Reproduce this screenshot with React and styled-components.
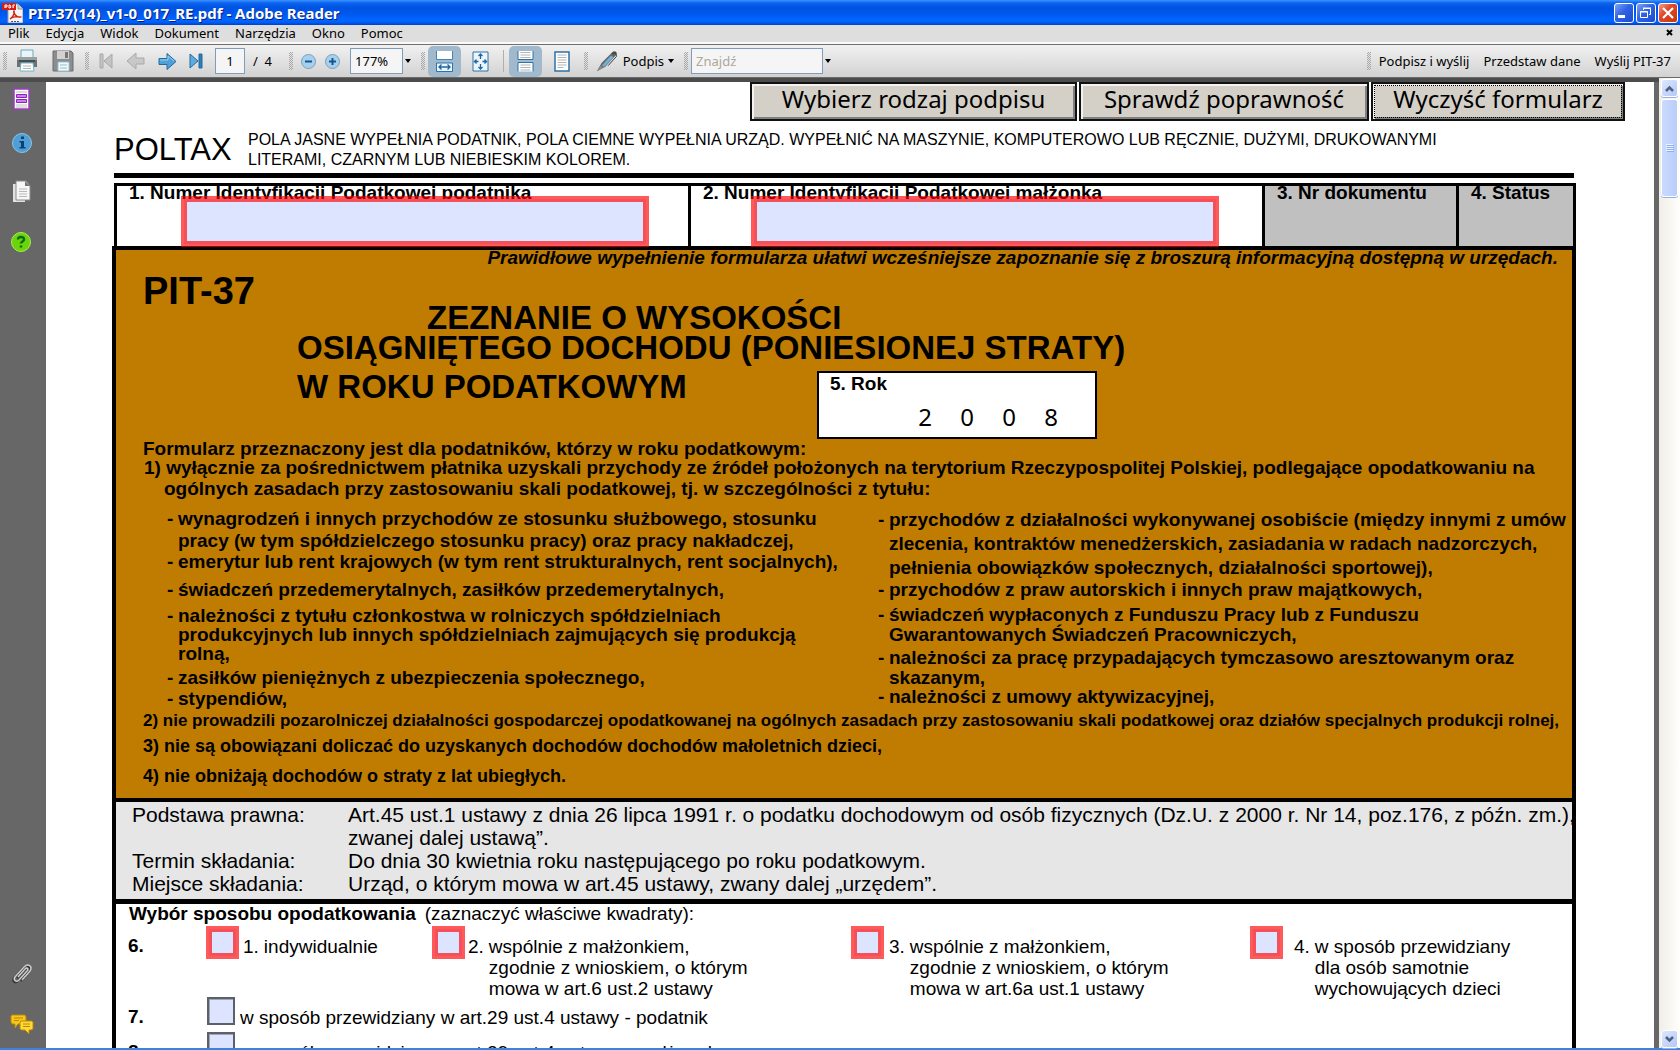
import styled, { createGlobalStyle } from "styled-components";

const GlobalStyle = createGlobalStyle`
  * {
    box-sizing: border-box;
  }
  body {
    margin: 0;
    overflow: hidden;
    font-family: "Liberation Sans", Arial, sans-serif;
    color: #000;
  }
  button, input {
    font: inherit;
    color: inherit;
    margin: 0;
  }
  h1, h2, p, ul, dl, dd {
    margin: 0;
    padding: 0;
  }
  svg {
    display: block;
  }
`;

const Window = styled.div`
  display: flex;
  flex-direction: column;
  height: 100vh;
  border-bottom: 2px solid #3f82dc;
`;

/* ---------- title bar ---------- */

const TitleBar = styled.header`
  flex: none;
  display: flex;
  align-items: center;
  height: 25px;
  padding: 0 2px;
  background: linear-gradient(
    #3d95ff 0,
    #0a63f0 3px,
    #0053e1 8px,
    #0058ee 14px,
    #0066ff 20px,
    #0061fb 22px,
    #0040c8 25px
  );
`;

const Title = styled.h1`
  flex: 1;
  padding-left: 5px;
  font: bold 15px/20px "Noto Sans", sans-serif;
  color: #fff;
  text-shadow: 1px 1px 0 #0a1e82;
`;

const WindowButtons = styled.div`
  display: flex;
  gap: 2px;
`;

const WindowButton = styled.button`
  width: 20px;
  height: 20px;
  padding: 0;
  border: 1px solid #fff;
  border-radius: 3px;
  background: ${(props) =>
    props.$close
      ? "linear-gradient(135deg, #f0a088, #e0482a 40%, #c8350f)"
      : "linear-gradient(135deg, #7fa4f5, #2f63e4 45%, #1c4bd0)"};
`;

/* ---------- menu ---------- */

const MenuBar = styled.nav`
  flex: none;
  display: flex;
  align-items: center;
  gap: 16px;
  height: 20px;
  padding: 0 7px 4px 8px;
  background: #dedede;
  border-bottom: 1px solid #6f6f6f;
  box-shadow: inset 0 -2px 0 #fafafa;
`;

const MenuItem = styled.button`
  padding: 0;
  border: 0;
  background: none;
  font: 13px/16px "Noto Sans", sans-serif;
`;

const CloseDocument = styled(MenuItem)`
  margin-left: auto;
`;

/* ---------- toolbar ---------- */

const Toolbar = styled.div`
  flex: none;
  display: flex;
  align-items: center;
  height: 33px;
  background: linear-gradient(#f1f1f1, #d2d2d2);
  border-bottom: 1px solid #6a6a6a;
  font: 13px/16px "Noto Sans", sans-serif;
`;

const Handle = styled.span`
  flex: none;
  width: 4px;
  height: 18px;
  margin-left: ${(props) => (props.$end ? "auto" : `${props.$gap}px`)};
  background: repeating-conic-gradient(#a8a8a8 0 25%, transparent 0 50%) 0 0 /
    2px 2px;
`;

const ToolButton = styled.button`
  flex: none;
  display: flex;
  align-items: center;
  justify-content: center;
  width: ${(props) => props.$width}px;
  height: 31px;
  margin-left: ${(props) => props.$gap}px;
  padding: 0;
  border: 0;
  border-radius: 5px;
  background: ${(props) => (props.$active ? "#a0b9cd" : "none")};
  white-space: nowrap;
`;

const ToolInput = styled.input`
  flex: none;
  width: ${(props) => props.$width}px;
  height: 26px;
  margin-left: ${(props) => props.$gap}px;
  padding: 0 4px;
  border: 1px solid #7f9db9;
  background: #f5f5f5;
  text-align: ${(props) => props.$align || "left"};
  &::placeholder {
    color: #aca899;
  }
`;

const PageCount = styled.span`
  margin-left: 8px;
  white-space: pre;
`;

const Separator = styled.span`
  width: 1px;
  height: 22px;
  margin-left: 6px;
  background: #b5b09c;
`;

const TextTools = styled.div`
  display: flex;
  align-items: center;
  gap: 14px;
  padding: 0 9px 0 8px;
`;

const TextTool = styled(MenuItem)`
  white-space: nowrap;
`;

/* ---------- body ---------- */

const Body = styled.div`
  flex: 1;
  display: flex;
  min-height: 0;
`;

const Viewer = styled.div`
  flex: 1;
  display: flex;
  min-width: 0;
  border-top: 4px solid #4c4c4c;
  background: #676767;
`;

const Sidebar = styled.aside`
  flex: none;
  display: flex;
  flex-direction: column;
  width: 46px;
  padding: 5px 0 12px 10px;
`;

const SideButton = styled.button`
  width: 24px;
  height: 24px;
  margin-top: ${(props) => (props.$last ? "auto" : `${props.$gap}px`)};
  padding: 0;
  border: 0;
  background: none;
`;

const Page = styled.main`
  flex: 1;
  min-width: 0;
  margin-right: 5px;
  overflow: hidden;
  background: #fff;
`;

const ScrollBar = styled.div`
  flex: none;
  display: flex;
  flex-direction: column;
  width: 21px;
  padding: 1px 2px 0;
  background: linear-gradient(90deg, #f0eee8, #fefefb);
`;

const ScrollButton = styled.button`
  display: flex;
  align-items: center;
  justify-content: center;
  height: 18px;
  padding: 0;
  border: 1px solid #fff;
  border-radius: 3px;
  background: linear-gradient(135deg, #dce7ff, #b4c8f6);
  box-shadow: 0 1px 0 #98b0e8;
`;

const ScrollThumb = styled.div`
  display: flex;
  align-items: center;
  justify-content: center;
  height: 98px;
  margin-top: 2px;
  margin-bottom: auto;
  border: 1px solid #fff;
  border-radius: 3px;
  background: linear-gradient(90deg, #cbdbfe, #b9cdfa);
  box-shadow: 0 1px 0 #98b0e8;
`;

/* ---------- form ---------- */

const FormActions = styled.div`
  display: flex;
  justify-content: flex-end;
  gap: 2px;
  padding-right: 29px;
`;

const FormButton = styled.button`
  width: ${(props) => props.$width}px;
  height: 39px;
  padding: 0 0 5px;
  border: 2px solid #111;
  background: #d4d0c8;
  box-shadow: inset 2px 2px 0 #f4f2ee, inset -2px -2px 0 #808080;
  font: 24px/30px "Noto Sans", sans-serif;
  white-space: nowrap;
  outline: ${(props) => (props.$focused ? "1px dotted #000" : "none")};
  outline-offset: -4px;
`;

const Form = styled.form`
  margin: 9px 78px 0 66px;
  font-size: 19px;
`;

const Intro = styled.div`
  display: flex;
  margin: 0 2px;
  padding-bottom: 3px;
  border-bottom: 5px solid #000;
`;

const Brand = styled.div`
  flex: none;
  width: 134px;
  font-size: 31px;
  line-height: 40px;
`;

const IntroText = styled.p`
  font-size: 16px;
  line-height: 20px;
  white-space: nowrap;
`;

const IdRow = styled.div`
  display: grid;
  grid-template-columns: 574fr 574fr 194fr 114fr;
  margin: 5px 0 0 2px;
  border: 3px solid #000;
  border-bottom: 0;
`;

const IdCell = styled.div`
  position: relative;
  height: 60px;
  padding-left: 12px;
  border-right: 3px solid #000;
  background: ${(props) => (props.$office ? "#c0c0c0" : "#fff")};
  font-weight: bold;
  line-height: 14px;
  white-space: nowrap;
  &:last-child {
    border-right: 0;
  }
`;

const IdField = styled.input`
  position: absolute;
  top: 10px;
  left: ${(props) => props.$left}px;
  width: 82%;
  height: 51px;
  border: 3px solid rgba(255, 0, 0, 0.65);
  background: #dde4ff padding-box;
  box-shadow: inset 0 0 0 3px rgba(255, 0, 0, 0.65);
`;

const Sheet = styled.div`
  border: 4px solid #000;
  border-bottom: 0;
`;

const Cover = styled.section`
  padding-bottom: 7px;
  border-bottom: 4px solid #000;
  background: #bf7c00;
  font-weight: bold;
  white-space: nowrap;
`;

const Hint = styled.p`
  padding-right: 14px;
  font-style: italic;
  line-height: 16px;
  text-align: right;
`;

const Heading = styled.div`
  display: grid;
  grid-template-columns: 154px 1fr;
  padding: 5px 0 0 27px;
`;

const FormCode = styled.div`
  font-size: 38px;
  line-height: 40px;
`;

const FormTitle = styled.h2`
  padding-top: 32px;
  font-size: 33px;
  line-height: 30px;
`;

const TitleLead = styled.div`
  padding-left: 130px;
`;

const YearRow = styled.div`
  display: grid;
  grid-template-columns: 520px 280px;
  margin-top: 8px;
  line-height: 32px;
`;

const YearBox = styled.div`
  height: 68px;
  padding: 1px 0 0 11px;
  border: 2px solid #000;
  background: #fff;
  font-size: 19px;
  line-height: 20px;
`;

const Digits = styled.div`
  display: grid;
  grid-template-columns: repeat(4, 42px);
  margin: 8px 0 0 74px;
  font: 24px/30px "Noto Sans", sans-serif;
  text-align: center;
`;

const Para = styled.p`
  padding-left: ${(props) => props.$indent || 27}px;
  font-size: ${(props) => props.$size || 19}px;
  line-height: ${(props) => props.$line}px;
`;

const Columns = styled.div`
  display: grid;
  grid-template-columns: 762fr 694fr;
  margin: 7px 0 2px;
`;

const List = styled.ul`
  padding-left: ${(props) => props.$indent}px;
  list-style: none;
`;

const Item = styled.li`
  display: flex;
  margin-top: ${(props) => props.$gap}px;
  line-height: ${(props) => props.$line}px;
  &::before {
    content: "-";
    width: 11px;
  }
`;

const Legal = styled.dl`
  display: grid;
  grid-template-columns: 216px 1fr;
  padding: 1px 0 4px 16px;
  border-bottom: 5px solid #000;
  background: #e6e6e6;
  font-size: 21px;
  line-height: 23px;
  white-space: nowrap;
`;

const Choices = styled.section`
  line-height: 20px;
  white-space: nowrap;
`;

const ChoicesTitle = styled.p`
  display: flex;
  gap: 9px;
  padding: 0 0 2px 13px;
`;

const ChoiceRow = styled.div`
  display: grid;
  grid-template-columns: 90px 226fr 419fr 399fr 322fr;
  height: ${(props) => props.$height}px;
`;

const RowNumber = styled.strong`
  padding: 10px 0 0 12px;
`;

const Choice = styled.div`
  display: flex;
  gap: ${(props) => props.$gap}px;
`;

const WideChoice = styled(Choice)`
  grid-column: 2 / -1;
  padding-left: 1px;
`;

const CheckBox = styled.input.attrs({ type: "checkbox" })`
  appearance: none;
  flex: none;
  width: ${(props) => (props.$required ? 33 : 28)}px;
  height: ${(props) => (props.$required ? 33 : 28)}px;
  border: ${(props) =>
    props.$required ? "3px solid rgba(255, 0, 0, 0.65)" : "2px solid #5c6068"};
  background: #dde4ff padding-box;
  box-shadow: ${(props) =>
    props.$required
      ? "inset 0 0 0 3px rgba(255, 0, 0, 0.65)"
      : "inset 1px 1px 0 #a0a6b8"};
`;

const ChoiceLabel = styled.label`
  display: flex;
  gap: 5px;
  padding-top: 10px;
  line-height: 21px;
`;

/* ---------- icons ---------- */

const PdfIcon = () => (
  <svg width="21" height="20" viewBox="0 0 21 20">
    <path d="M6 1h10l5 5v14H6z" fill="#f4f4f4" stroke="#999" />
    <path d="M16 1v5h5" fill="#cfcfcf" stroke="#999" />
    <path d="M0 0h14v7H0z" fill="#d81e10" />
    <path
      d="M3 5V2h2v2H3M7 2v3h1l1-1-1-2zM11 5V2h2M11 4h1"
      fill="none"
      stroke="#fff"
    />
    <path
      d="M8 16c3-2 5-6 4-8-1 1 2 7 6 6-3-1-8 0-10 2z"
      fill="none"
      stroke="#d02010"
      strokeWidth="1.4"
    />
    <path d="M9 18.500h9" stroke="#555" strokeDasharray="2 1" />
  </svg>
);

const MinimizeIcon = () => (
  <svg width="18" height="18" viewBox="0 0 18 18">
    <path d="M3 11h7v3H3z" fill="#fff" />
  </svg>
);

const RestoreIcon = () => (
  <svg width="18" height="18" viewBox="0 0 18 18" fill="none" stroke="#fff">
    <path d="M6.500 6V4.500h7v6H12M6 4h8" />
    <path d="M3.500 7.500h7v6h-7zM3 8h8" />
  </svg>
);

const CloseIcon = () => (
  <svg width="18" height="18" viewBox="0 0 18 18">
    <path d="M4 4l10 10M14 4L4 14" stroke="#fff" strokeWidth="2.200" />
  </svg>
);

const SmallCross = () => (
  <svg width="7" height="7" viewBox="0 0 7 7">
    <path d="M1 1l5 5M6 1L1 6" stroke="#000" strokeWidth="2" />
  </svg>
);

const PrinterIcon = () => (
  <svg width="22" height="24" viewBox="0 0 22 24">
    <path d="M5 1h12v8H5z" fill="#e8f6fa" stroke="#6fa9bd" />
    <path d="M1 9h20v9H1z" fill="#6e7275" />
    <path d="M1 8h20v3H1z" fill="#9b9fa2" />
    <path d="M3 12h16" stroke="#4a4d50" strokeWidth="2" />
    <path d="M5 14h12l1 8H4z" fill="#fff" stroke="#6fb4cc" />
    <path d="M7 17h8M7 19.500h8" stroke="#b5b5b5" />
  </svg>
);

const SaveIcon = () => (
  <svg width="22" height="22" viewBox="0 0 22 22">
    <path d="M1 1h18l2 2v18H1z" fill="#8d8d8d" stroke="#6c6c6c" />
    <path d="M5 1h12v8H5z" fill="#d2d2d2" />
    <path d="M13 2h3v6h-3z" fill="#757575" />
    <path d="M6 12h11v9H6z" fill="#f4fafc" stroke="#8ac4da" />
    <path d="M8 15h7M8 18h7" stroke="#9bb8c4" />
  </svg>
);

const FirstIcon = () => (
  <svg width="14" height="16" viewBox="0 0 14 16">
    <path d="M1 1h3v14H1zM13 1v14L5 8z" fill="#c4c4c4" stroke="#a8a8a8" />
  </svg>
);

const PrevIcon = () => (
  <svg width="19" height="18" viewBox="0 0 19 18">
    <path
      d="M1 9l9-8v5h8v6h-8v5z"
      fill="#c8c8c8"
      stroke="#a9a9a9"
      strokeLinejoin="round"
    />
  </svg>
);

const NextIcon = () => (
  <svg width="19" height="19" viewBox="0 0 19 19">
    <path
      d="M18 9.500l-9-8v5H1v6h8v5z"
      fill="#4fa0d8"
      stroke="#246a9f"
      strokeLinejoin="round"
    />
    <path d="M2 8h8V4l6 5" fill="none" stroke="#9bd0f0" />
  </svg>
);

const LastIcon = () => (
  <svg width="14" height="16" viewBox="0 0 14 16">
    <path d="M1 1v14l8-7z" fill="#5fabdd" stroke="#246a9f" />
    <path d="M10 1h3v14h-3z" fill="#2f7db8" stroke="#246a9f" />
  </svg>
);

const ZoomDot = ({ plus }) => (
  <svg width="17" height="17" viewBox="0 0 17 17">
    <circle cx="8.500" cy="8.500" r="7" fill="#a5d0ee" stroke="#7f9fb5" />
    <path d="M5 8.500h7" stroke="#14578f" strokeWidth="2" />
    {plus && <path d="M8.500 5v7" stroke="#14578f" strokeWidth="2" />}
  </svg>
);

const Caret = () => (
  <svg width="6" height="4" viewBox="0 0 6 4">
    <path d="M0 0h6L3 4z" fill="#000" />
  </svg>
);

const FitWidthIcon = () => (
  <svg width="17" height="21" viewBox="0 0 17 21">
    <path d="M1 0h15v8H1z" fill="#fff" />
    <path d="M.5 0v8.500h16V0" fill="none" stroke="#3f86b8" />
    <path d="M.5 12h16v8.500H.5z" fill="#eaf5fc" stroke="#2c72a8" />
    <path
      d="M3 16h11M5.500 13.500L3 16l2.500 2.500M11.500 13.500L14 16l-2.500 2.500"
      fill="none"
      stroke="#1e65a2"
      strokeWidth="1.300"
    />
  </svg>
);

const FitPageIcon = () => (
  <svg width="17" height="21" viewBox="0 0 17 21">
    <path d="M1 1h15v19H1z" fill="#edf6fc" stroke="#2c72a8" />
    <path
      d="M8.500 3v5M8.500 13v5M2 10.500h4.500M10.500 10.500H15M6.500 5l2-2 2 2M6.500 16l2 2 2-2M4.500 8.500l-2 2 2 2M12.500 8.500l2 2-2 2"
      fill="none"
      stroke="#1e65a2"
      strokeWidth="1.300"
    />
  </svg>
);

const ContinuousIcon = () => (
  <svg width="17" height="21" viewBox="0 0 17 21">
    <path d="M1 0v8.500h15V0M1 20.500V11.500h15v9" fill="#fff" stroke="#2c72a8" />
    <path
      d="M3.500 1.500h10M3.500 4h10M3.500 6.500h10M3.500 14h10M3.500 16.500h10M3.500 19h10"
      stroke="#b3b3b3"
    />
  </svg>
);

const SinglePageIcon = () => (
  <svg width="16" height="21" viewBox="0 0 16 21">
    <path d="M1 1h14v19H1z" fill="#fff" stroke="#2c72a8" strokeWidth="1.500" />
    <path
      d="M3.500 4h9M3.500 6.500h9M3.500 9h9M3.500 11.500h9M3.500 14h9M3.500 16.500h6"
      stroke="#b3b3b3"
    />
  </svg>
);

const PenIcon = () => (
  <svg width="25" height="23" viewBox="0 0 25 23">
    <path d="M1 22l5-9L18 1c2-1 5 0 4 3L10 17z" fill="#646464" />
    <path d="M6 16L16 5l3 2L9 17z" fill="#6fb0d4" />
    <path d="M17 3l4-1 1 4-9 10" fill="none" stroke="#333" />
    <path d="M1 22l4-6 3 2z" fill="#8c8c8c" />
  </svg>
);

const Chevron = ({ down }) => (
  <svg width="9" height="7" viewBox="0 0 9 7">
    <path
      d={down ? "M1 1l3.500 3.500L8 1" : "M1 6l3.500-3.500L8 6"}
      fill="none"
      stroke="#4d6185"
      strokeWidth="2.500"
    />
  </svg>
);

const GripIcon = () => (
  <svg width="8" height="8" viewBox="0 0 8 8">
    <path d="M0 .5h7M0 2.500h7M0 4.500h7M0 6.500h7" stroke="#eef4fe" />
    <path d="M1 1.500h7M1 3.500h7M1 5.500h7M1 7.500h7" stroke="#8cb0f8" />
  </svg>
);

const FormPanelIcon = () => (
  <svg width="24" height="24" viewBox="0 0 24 24">
    <path d="M4 2h15v20H4z" fill="#fff" stroke="#a03cc4" strokeWidth="1.500" />
    <path d="M6 5h11M6 18h11M6 20h11" stroke="#bdbdbd" />
    <path
      d="M6.500 7.500h10v3h-10zM6.500 12.500h10v3h-10z"
      fill="#d07cf0"
      stroke="#8a26b4"
    />
  </svg>
);

const InfoIcon = () => (
  <svg width="24" height="24" viewBox="0 0 24 24">
    <circle cx="12" cy="12" r="9.500" fill="#4f9fd4" stroke="#8cc4e6" />
    <path d="M11 5.500h3v2.500h-3zM9.500 10H14v6h1.500v1.500h-6V16H11v-4.500H9.500z" fill="#0b3f78" />
  </svg>
);

const PagesIcon = () => (
  <svg width="24" height="24" viewBox="0 0 24 24">
    <path d="M3 4h12v18H3z" fill="#e2e2e2" />
    <path d="M6 1h10l4 5v14H6z" fill="#f7f7f7" stroke="#8a8a8a" />
    <path d="M15 1v5h5z" fill="#777" />
    <path d="M9 9h8M9 11.500h8M9 14h8M9 16.500h8" stroke="#b8b8b8" />
  </svg>
);

const HelpIcon = () => (
  <svg width="24" height="24" viewBox="0 0 24 24">
    <circle cx="11" cy="12" r="9.500" fill="#6bd40c" stroke="#a8ee52" />
    <path
      d="M8 9.500c0-3.500 6-3.500 6 0 0 2-3 2-3 4M11 15.500v2"
      fill="none"
      stroke="#0b6a12"
      strokeWidth="2.500"
    />
  </svg>
);

const ClipIcon = () => (
  <svg width="24" height="24" viewBox="0 0 24 24" fill="none" strokeWidth="2">
    <path
      d="M8 15l7-8c2-2 4 0 2 2l-8 9c-3 3-6 0-4-3l9-10c4-4 9-1 6 4l-8 9"
      transform="translate(-1 1)"
      stroke="#333"
    />
    <path
      d="M8 15l7-8c2-2 4 0 2 2l-8 9c-3 3-6 0-4-3l9-10c4-4 9-1 6 4l-8 9"
      stroke="#cfcfcf"
      strokeWidth="1.500"
    />
  </svg>
);

const CommentsIcon = () => (
  <svg width="24" height="24" viewBox="0 0 24 24" stroke="#b98a00">
    <path d="M2 3h13l1 2v6l-2 1H8l-3 4v-4H2L1 10V4z" fill="#f7c61c" />
    <path d="M4 6h9M4 8.500h5" />
    <path d="M11 9h11l1 1v7l-2 1h-2v4l-4-4h-4l-1-1v-7z" fill="#ffd83a" />
    <path d="M13 12h7M13 14.500h7" />
  </svg>
);

/* ---------- data ---------- */

const menu = ["Plik", "Edycja", "Widok", "Dokument", "Narzędzia", "Okno", "Pomoc"];

const sideTop = [
  { name: "Formularz", Icon: FormPanelIcon, gap: 0 },
  { name: "Informacje", Icon: InfoIcon, gap: 20 },
  { name: "Strony", Icon: PagesIcon, gap: 25 },
  { name: "Pomoc", Icon: HelpIcon, gap: 26 },
];

const leftItems = [
  {
    gap: 0,
    line: 22,
    lines: [
      "wynagrodzeń i innych przychodów ze stosunku służbowego, stosunku",
      "pracy (w tym spółdzielczego stosunku pracy) oraz pracy nakładczej,",
    ],
  },
  {
    gap: 0,
    line: 20,
    lines: ["emerytur lub rent krajowych (w tym rent strukturalnych, rent socjalnych),"],
  },
  {
    gap: 8,
    line: 20,
    lines: ["świadczeń przedemerytalnych, zasiłków przedemerytalnych,"],
  },
  {
    gap: 6,
    line: 19,
    lines: [
      "należności z tytułu członkostwa w rolniczych spółdzielniach",
      "produkcyjnych lub innych spółdzielniach zajmujących się produkcją",
      "rolną,",
    ],
  },
  {
    gap: 5,
    line: 20,
    lines: ["zasiłków pieniężnych z ubezpieczenia społecznego,"],
  },
  { gap: 1, line: 20, lines: ["stypendiów,"] },
];

const rightItems = [
  {
    gap: 0,
    line: 24,
    lines: [
      "przychodów z działalności wykonywanej osobiście (między innymi z umów",
      "zlecenia, kontraktów menedżerskich, zasiadania w radach nadzorczych,",
      "pełnienia obowiązków społecznych, działalności sportowej),",
    ],
  },
  {
    gap: 0,
    line: 20,
    lines: ["przychodów z praw autorskich i innych praw majątkowych,"],
  },
  {
    gap: 5,
    line: 20,
    lines: [
      "świadczeń wypłaconych z Funduszu Pracy lub z Funduszu",
      "Gwarantowanych Świadczeń Pracowniczych,",
    ],
  },
  {
    gap: 3,
    line: 20,
    lines: [
      "należności za pracę przypadających tymczasowo aresztowanym oraz",
      "skazanym,",
    ],
  },
  { gap: 0, line: 18, lines: ["należności z umowy aktywizacyjnej,"] },
];

const options = [
  { gap: 4, lines: ["indywidualnie"] },
  {
    gap: 3,
    lines: [
      "wspólnie z małżonkiem,",
      "zgodnie z wnioskiem, o którym",
      "mowa w art.6 ust.2 ustawy",
    ],
  },
  {
    gap: 5,
    lines: [
      "wspólnie z małżonkiem,",
      "zgodnie z wnioskiem, o którym",
      "mowa w art.6a ust.1 ustawy",
    ],
  },
  {
    gap: 11,
    lines: ["w sposób przewidziany", "dla osób samotnie", "wychowujących dzieci"],
  },
];

const Lines = ({ lines }) => (
  <div>
    {lines.map((line) => (
      <div key={line}>{line}</div>
    ))}
  </div>
);

const Bullets = ({ items, indent }) => (
  <List $indent={indent}>
    {items.map((item) => (
      <Item key={item.lines[0]} $gap={item.gap} $line={item.line}>
        <Lines lines={item.lines} />
      </Item>
    ))}
  </List>
);

const ReaderToolbar = () => (
  <Toolbar>
    <Handle $gap={3} />
    <ToolButton $width={24} $gap={8} aria-label="Drukuj">
      <PrinterIcon />
    </ToolButton>
    <ToolButton $width={24} $gap={12} aria-label="Zapisz">
      <SaveIcon />
    </ToolButton>
    <Handle $gap={10} />
    <ToolButton $width={20} $gap={7} aria-label="Pierwsza strona">
      <FirstIcon />
    </ToolButton>
    <ToolButton $width={20} $gap={9} aria-label="Poprzednia strona">
      <PrevIcon />
    </ToolButton>
    <ToolButton $width={20} $gap={12} aria-label="Następna strona">
      <NextIcon />
    </ToolButton>
    <ToolButton $width={20} $gap={9} aria-label="Ostatnia strona">
      <LastIcon />
    </ToolButton>
    <ToolInput
      $width={30}
      $gap={9}
      $align="center"
      aria-label="Numer strony"
      defaultValue="1"
    />
    <PageCount>{"/  4"}</PageCount>
    <Handle $gap={17} />
    <ToolButton $width={18} $gap={6} aria-label="Pomniejsz">
      <ZoomDot />
    </ToolButton>
    <ToolButton $width={18} $gap={6} aria-label="Powiększ">
      <ZoomDot plus />
    </ToolButton>
    <ToolInput $width={53} $gap={9} aria-label="Powiększenie" defaultValue="177%" />
    <ToolButton $width={8} $gap={1} aria-label="Lista powiększeń">
      <Caret />
    </ToolButton>
    <Handle $gap={9} />
    <ToolButton $width={33} $gap={3} $active aria-label="Dopasuj szerokość">
      <FitWidthIcon />
    </ToolButton>
    <ToolButton $width={33} $gap={3} aria-label="Dopasuj stronę">
      <FitPageIcon />
    </ToolButton>
    <Separator />
    <ToolButton $width={33} $gap={5} $active aria-label="Widok ciągły">
      <ContinuousIcon />
    </ToolButton>
    <ToolButton $width={33} $gap={3} aria-label="Jedna strona">
      <SinglePageIcon />
    </ToolButton>
    <Handle $gap={6} />
    <ToolButton $width={68} $gap={8}>
      <PenIcon />
      &nbsp;Podpis
    </ToolButton>
    <ToolButton $width={8} $gap={3} aria-label="Opcje podpisu">
      <Caret />
    </ToolButton>
    <Handle $gap={9} />
    <ToolInput $width={132} $gap={3} aria-label="Znajdź" placeholder="Znajdź" />
    <ToolButton $width={8} $gap={1} aria-label="Opcje wyszukiwania">
      <Caret />
    </ToolButton>
    <Handle $end />
    <TextTools>
      <TextTool>Podpisz i wyślij</TextTool>
      <TextTool>Przedstaw dane</TextTool>
      <TextTool>Wyślij PIT-37</TextTool>
    </TextTools>
  </Toolbar>
);

const CoverSection = () => (
  <Cover>
    <Hint>
      Prawidłowe wypełnienie formularza ułatwi wcześniejsze zapoznanie się z
      broszurą informacyjną dostępną w urzędach.
    </Hint>
    <Heading>
      <FormCode>PIT-37</FormCode>
      <FormTitle>
        <TitleLead>ZEZNANIE O WYSOKOŚCI</TitleLead>
        OSIĄGNIĘTEGO DOCHODU (PONIESIONEJ STRATY)
        <YearRow>
          W ROKU PODATKOWYM
          <YearBox>
            5. Rok
            <Digits>
              {["2", "0", "0", "8"].map((digit, i) => (
                <span key={i}>{digit}</span>
              ))}
            </Digits>
          </YearBox>
        </YearRow>
      </FormTitle>
    </Heading>
    <Para $line={20}>
      Formularz przeznaczony jest dla podatników, którzy w roku podatkowym:
    </Para>
    <Para $line={18} $indent={28}>
      1) wyłącznie za pośrednictwem płatnika uzyskali przychody ze źródeł
      położonych na terytorium Rzeczypospolitej Polskiej, podlegające
      opodatkowaniu na
    </Para>
    <Para $line={24} $indent={48}>
      ogólnych zasadach przy zastosowaniu skali podatkowej, tj. w szczególności
      z tytułu:
    </Para>
    <Columns>
      <Bullets items={leftItems} indent={51} />
      <Bullets items={rightItems} indent={0} />
    </Columns>
    <Para $line={20} $size={17}>
      2) nie prowadzili pozarolniczej działalności gospodarczej opodatkowanej na
      ogólnych zasadach przy zastosowaniu skali podatkowej oraz działów
      specjalnych produkcji rolnej,
    </Para>
    <Para $line={30} $size={18}>
      3) nie są obowiązani doliczać do uzyskanych dochodów dochodów małoletnich
      dzieci,
    </Para>
    <Para $line={30} $size={18}>
      4) nie obniżają dochodów o straty z lat ubiegłych.
    </Para>
  </Cover>
);

const ChoicesSection = () => (
  <Choices>
    <ChoicesTitle>
      <strong>Wybór sposobu opodatkowania</strong>
      <span>(zaznaczyć właściwe kwadraty):</span>
    </ChoicesTitle>
    <ChoiceRow $height={71}>
      <RowNumber>6.</RowNumber>
      {options.map((option, i) => (
        <Choice key={i} $gap={option.gap}>
          <CheckBox id={`option${i}`} $required />
          <ChoiceLabel htmlFor={`option${i}`}>
            <span>{i + 1}.</span>
            <Lines lines={option.lines} />
          </ChoiceLabel>
        </Choice>
      ))}
    </ChoiceRow>
    {["podatnik", "małżonek"].map((person, i) => (
      <ChoiceRow key={person} $height={35}>
        <RowNumber>{i + 7}.</RowNumber>
        <WideChoice $gap={5}>
          <CheckBox id={person} />
          <ChoiceLabel htmlFor={person}>
            w sposób przewidziany w art.29 ust.4 ustawy - {person}
          </ChoiceLabel>
        </WideChoice>
      </ChoiceRow>
    ))}
  </Choices>
);

const App = () => {
  return (
    <Window>
      <GlobalStyle />
      <TitleBar>
        <PdfIcon />
        <Title>PIT-37(14)_v1-0_017_RE.pdf - Adobe Reader</Title>
        <WindowButtons>
          <WindowButton aria-label="Minimalizuj">
            <MinimizeIcon />
          </WindowButton>
          <WindowButton aria-label="Przywróć">
            <RestoreIcon />
          </WindowButton>
          <WindowButton $close aria-label="Zamknij">
            <CloseIcon />
          </WindowButton>
        </WindowButtons>
      </TitleBar>

      <MenuBar>
        {menu.map((item) => (
          <MenuItem key={item}>{item}</MenuItem>
        ))}
        <CloseDocument aria-label="Zamknij dokument">
          <SmallCross />
        </CloseDocument>
      </MenuBar>

      <ReaderToolbar />

      <Body>
        <Viewer>
          <Sidebar>
            {sideTop.map(({ name, Icon, gap }) => (
              <SideButton key={name} $gap={gap} aria-label={name}>
                <Icon />
              </SideButton>
            ))}
            <SideButton $last aria-label="Załączniki">
              <ClipIcon />
            </SideButton>
            <SideButton $gap={26} aria-label="Komentarze">
              <CommentsIcon />
            </SideButton>
          </Sidebar>

          <Page>
            <FormActions>
              <FormButton $width={327}>Wybierz rodzaj podpisu</FormButton>
              <FormButton $width={290}>Sprawdź poprawność</FormButton>
              <FormButton $width={254} $focused>
                Wyczyść formularz
              </FormButton>
            </FormActions>

            <Form>
              <Intro>
                <Brand>POLTAX</Brand>
                <IntroText>
                  POLA JASNE WYPEŁNIA PODATNIK, POLA CIEMNE WYPEŁNIA URZĄD.
                  WYPEŁNIĆ NA MASZYNIE, KOMPUTEROWO LUB RĘCZNIE, DUŻYMI,
                  DRUKOWANYMI
                  <br />
                  LITERAMI, CZARNYM LUB NIEBIESKIM KOLOREM.
                </IntroText>
              </Intro>

              <IdRow>
                <IdCell>
                  <label htmlFor="nip1">
                    1. Numer Identyfikacji Podatkowej podatnika
                  </label>
                  <IdField id="nip1" $left={64} />
                </IdCell>
                <IdCell>
                  <label htmlFor="nip2">
                    2. Numer Identyfikacji Podatkowej małżonka
                  </label>
                  <IdField id="nip2" $left={60} />
                </IdCell>
                <IdCell $office>3. Nr dokumentu</IdCell>
                <IdCell $office>4. Status</IdCell>
              </IdRow>

              <Sheet>
                <CoverSection />
                <Legal>
                  <dt>Podstawa prawna:</dt>
                  <dd>
                    Art.45 ust.1 ustawy z dnia 26 lipca 1991 r. o podatku
                    dochodowym od osób fizycznych (Dz.U. z 2000 r. Nr 14,
                    poz.176, z późn. zm.),
                    <br />
                    zwanej dalej ustawą”.
                  </dd>
                  <dt>Termin składania:</dt>
                  <dd>
                    Do dnia 30 kwietnia roku następującego po roku podatkowym.
                  </dd>
                  <dt>Miejsce składania:</dt>
                  <dd>
                    Urząd, o którym mowa w art.45 ustawy, zwany dalej
                    „urzędem”.
                  </dd>
                </Legal>
                <ChoicesSection />
              </Sheet>
            </Form>
          </Page>
        </Viewer>

        <ScrollBar>
          <ScrollButton aria-label="W górę">
            <Chevron />
          </ScrollButton>
          <ScrollThumb>
            <GripIcon />
          </ScrollThumb>
          <ScrollButton aria-label="W dół">
            <Chevron down />
          </ScrollButton>
        </ScrollBar>
      </Body>
    </Window>
  );
};

export default App;
